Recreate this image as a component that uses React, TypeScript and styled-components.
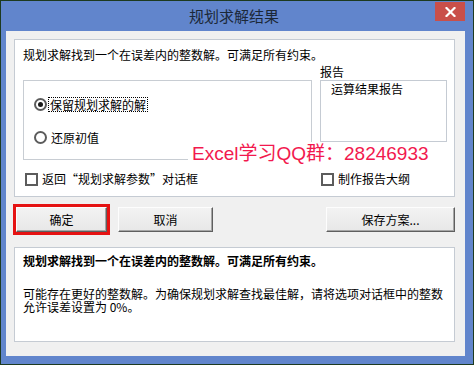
import styled, { createGlobalStyle } from 'styled-components'

const GlobalStyle = createGlobalStyle`
  html, body {
    margin: 0;
    padding: 0;
    background: #ffffff;
  }
  body {
    font-family: "Noto Sans CJK SC", "Noto Sans", sans-serif;
    font-size: 12px;
    color: #000;
  }
`

export default function App() {
  return (
    <>
      <GlobalStyle />
      <Window>
        <TitleBar>
          <Title>规划求解结果</Title>
          <CloseButton>
            <svg width="11" height="10" viewBox="0 0 11 10">
              <path d="M1.5 1 L9.5 9 M9.5 1 L1.5 9" stroke="#fff" strokeWidth="2.2" strokeLinecap="square" />
            </svg>
          </CloseButton>
        </TitleBar>

        <Client>
          <TopPanel>
            <Message>规划求解找到一个在误差内的整数解。可满足所有约束。</Message>
            <Body>
              <span />
              <ReportLabel>报告</ReportLabel>

              <GroupBox>
                <Radio>
                  <RadioCircle checked />
                  <FocusLabel>保留规划求解的解</FocusLabel>
                </Radio>
                <Radio>
                  <RadioCircle />
                  <RadioText>还原初值</RadioText>
                </Radio>
              </GroupBox>
              <ListBox>
                <ListItem>运算结果报告</ListItem>
              </ListBox>

              <Check indent={2}>
                <CheckBox />
                返回“规划求解参数”对话框
              </Check>
              <Check indent={1}>
                <CheckBox />
                制作报告大纲
              </Check>
            </Body>
            <Watermark>Excel学习QQ群：28246933</Watermark>
          </TopPanel>

          <ButtonRow>
            <DefaultFrame>
              <Button width={91}>确定</Button>
            </DefaultFrame>
            <Button width={95} gap={8}>取消</Button>
            <Button width={129} push>保存方案...</Button>
          </ButtonRow>

          <BottomPanel>
            <BoldLine>规划求解找到一个在误差内的整数解。可满足所有约束。</BoldLine>
            <Para>
              可能存在更好的整数解。为确保规划求解查找最佳解，请将选项对话框中的整数
              <br />
              允许误差设置为 0%。
            </Para>
          </BottomPanel>
        </Client>
      </Window>
    </>
  )
}

const Window = styled.div`
  width: 474px;
  height: 365px;
  box-sizing: border-box;
  border: 1px solid #1d3a1f;
  background: #6185cc;
  display: flex;
  flex-direction: column;
`

const TitleBar = styled.div`
  height: 30px;
  display: grid;
  grid-template-columns: 1fr auto 1fr;
  padding: 0 8px 0 5px;
`

const Title = styled.div`
  grid-column: 2;
  font-size: 15px;
  line-height: 30px;
  color: #1b2838;
  margin-left: -3px;
`

const CloseButton = styled.div`
  grid-column: 3;
  justify-self: end;
  margin-top: 1px;
  width: 30px;
  height: 19px;
  background: #c94f4a;
  display: flex;
  align-items: center;
  justify-content: center;
`

const Client = styled.div`
  margin: 0 8px 0 5px;
  height: 325px;
  box-sizing: border-box;
  background: #f0f0f0;
  padding: 8px 10px 14px 8px;
  display: flex;
  flex-direction: column;
`

const TopPanel = styled.div`
  position: relative;
  height: 158px;
  box-sizing: border-box;
  background: #fff;
  border: 1px solid #c5cbd3;
  padding: 7px 8px 0 8px;
`

const Message = styled.div`
  line-height: 16px;
`

const Body = styled.div`
  display: grid;
  grid-template-columns: 289px 127px;
  grid-template-rows: 17px 80px auto;
  column-gap: 8px;
`

const ReportLabel = styled.div`
  line-height: 17px;
`

const GroupBox = styled.div`
  box-sizing: border-box;
  border: 1px solid #c8cdd3;
  padding: 15px 0 0 10px;
  display: flex;
  flex-direction: column;
  gap: 17px;
`

const Radio = styled.div`
  display: flex;
  align-items: center;
  height: 16px;
`

const RadioCircle = styled.span<{ checked?: boolean }>`
  width: 13px;
  height: 13px;
  box-sizing: border-box;
  border: 2px solid #5c5c5c;
  border-radius: 50%;
  background: #fff;
  display: flex;
  align-items: center;
  justify-content: center;
  margin-right: 2px;

  &::after {
    content: '';
    width: 5px;
    height: 5px;
    border-radius: 50%;
    background: ${p => (p.checked ? '#1a1a1a' : 'transparent')};
  }
`

const FocusLabel = styled.span`
  line-height: 13px;
  padding: 0 1px;
  outline: 1px dotted #000;
  outline-offset: 0;
`

const RadioText = styled.span`
  padding-left: 2px;
`

const ListBox = styled.div`
  align-self: start;
  height: 62px;
  box-sizing: border-box;
  border: 1px solid #c5cbd3;
  padding: 1px 10px 0;
`

const ListItem = styled.div`
  line-height: 14px;
`

const Check = styled.div<{ indent: number }>`
  display: flex;
  align-items: center;
  gap: 4px;
  margin-top: 11px;
  margin-left: ${p => p.indent}px;
  line-height: 16px;
`

const CheckBox = styled.span`
  width: 13px;
  height: 13px;
  box-sizing: border-box;
  border: 2px solid #5c5c5c;
  background: #fff;
`

const Watermark = styled.div`
  position: absolute;
  left: 173px;
  top: 102px;
  padding: 0 4px;
  background: #fff;
  color: #f2194e;
  font-family: "Liberation Sans", "Noto Sans CJK SC", sans-serif;
  font-size: 19px;
  line-height: 23px;
  white-space: nowrap;
`

const ButtonRow = styled.div`
  display: flex;
  align-items: center;
  height: 31px;
  margin: 7px 0 0 -1px;
`

const DefaultFrame = styled.div`
  border: 3px solid #e51313;
  display: flex;
`

const Button = styled.div<{ width: number; gap?: number; push?: boolean }>`
  width: ${p => p.width}px;
  height: 25px;
  box-sizing: border-box;
  margin-left: ${p => (p.push ? 'auto' : `${p.gap ?? 0}px`)};
  background: linear-gradient(#f3f3f3, #e7e7e7);
  border: 1px solid;
  border-color: #fdfdfd #5f5f5f #5f5f5f #fdfdfd;
  box-shadow: inset -1px -1px 0 #a6a6a6;
  display: flex;
  align-items: center;
  justify-content: center;
  font-size: 12px;
`

const BottomPanel = styled.div`
  margin-top: 12px;
  height: 95px;
  box-sizing: border-box;
  background: #fff;
  border: 1px solid #c5cbd3;
  padding: 5px 8px;
`

const BoldLine = styled.div`
  font-weight: 700;
  line-height: 16px;
`

const Para = styled.div`
  margin-top: 18px;
  line-height: 13px;
`
